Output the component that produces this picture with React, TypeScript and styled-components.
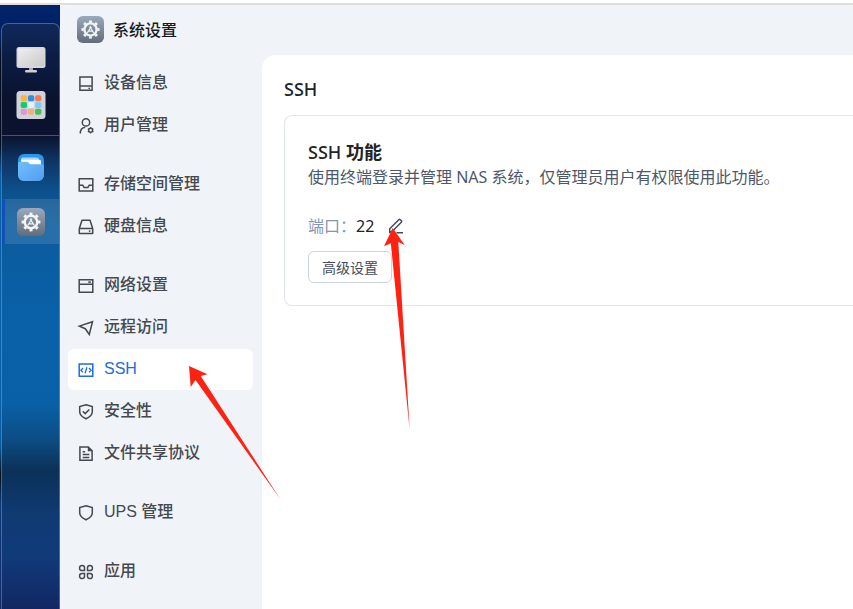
import React from "react";
import styled, { createGlobalStyle } from "styled-components";

const GlobalStyle = createGlobalStyle`
  *, *::before, *::after { box-sizing: border-box; }
  body {
    margin: 0;
    background: #fff;
    font-family: "Noto Sans", "Noto Sans CJK SC", sans-serif;
  }
  h1, h2, h3, p { margin: 0; }
`;

const Page = styled.div`
  display: flex;
  flex-direction: column;
  min-height: 100vh;
  border-top: 3px solid #fff;
  position: relative;
  overflow: hidden;
`;

const Screen = styled.div`
  flex: 1;
  display: flex;
  border-top: 2px solid #dfdfdf;
`;

const Desktop = styled.div`
  flex: none;
  width: 60px;
  display: flex;
  padding: 18px 0 0 1px;
  background: linear-gradient(
    180deg,
    #00246b 0,
    #001f60 34px,
    #020a20 50px,
    #020a20 140px,
    #0a5ea6 170px,
    #0a5ea6 440px,
    #050a18 470px,
    #0d3a78 500px,
    #102a66 100%
  );
`;

const Dock = styled.nav`
  flex: 1;
  border: 1px solid rgba(150, 180, 215, 0.42);
  border-bottom: 0;
  border-radius: 7px 7px 0 0;
  background: linear-gradient(
    180deg,
    #10285a 0,
    #0b1c44 36px,
    #0a122d 76px,
    #0b1330 112px,
    #0e3463 136px,
    #0c508b 166px,
    #0b5b9c 200px,
    #0a61a8 300px,
    #0a60a6 380px,
    #0c4d84 415px,
    #0b3159 446px,
    #0f3a72 490px,
    #103b7a 530px,
    #122763 100%
  );
`;

const DockSection = styled.div<{ $top?: boolean }>`
  display: flex;
  flex-direction: column;
  gap: ${(p) => (p.$top ? 0 : 9)}px;
  padding: ${(p) => (p.$top ? "13px 0 8px" : "9px 0 0")};
  border-bottom: ${(p) => (p.$top ? "1px solid rgba(150, 170, 205, 0.42)" : "0")};
`;

const DockButton = styled.button<{ $active?: boolean }>`
  height: 45px;
  padding: 0 2px 0 0;
  border: 0;
  border-left: 3px solid ${(p) => (p.$active ? "#124fb8" : "transparent")};
  background: ${(p) => (p.$active ? "rgba(255, 255, 255, 0.12)" : "transparent")};
  display: flex;
  align-items: center;
  justify-content: center;
  cursor: pointer;
`;

const Window = styled.div`
  flex: 1;
  min-width: 0;
  display: flex;
  flex-direction: column;
  background: #f0f4f9;
`;

const TitleBar = styled.header`
  display: flex;
  align-items: center;
  gap: 9px;
  height: 50px;
  padding: 0 17px 2px;
`;

const WindowTitle = styled.h1`
  font-size: 16px;
  line-height: 24px;
  font-weight: 500;
  color: #16191d;
  font-family: "Noto Sans CJK SC", sans-serif;
`;

const Body = styled.div`
  flex: 1;
  display: flex;
`;

const Sidebar = styled.nav`
  flex: none;
  width: 202px;
  display: flex;
  flex-direction: column;
  gap: 18px;
  padding: 8px 9px 8px 8px;
`;

const Group = styled.div`
  display: flex;
  flex-direction: column;
  gap: 1px;
`;

const NavItem = styled.button<{ $active?: boolean }>`
  display: flex;
  align-items: center;
  gap: 10px;
  height: 41px;
  padding: 0 10px;
  border: 0;
  border-radius: 6px;
  background: ${(p) => (p.$active ? "#fff" : "transparent")};
  color: ${(p) => (p.$active ? "#1d6ce0" : "#44484f")};
  font-family: "Liberation Sans", "Noto Sans CJK SC", sans-serif;
  font-size: 16px;
  font-weight: 500;
  line-height: 24px;
  text-align: left;
  cursor: pointer;
  svg { flex: none; overflow: visible; }
`;

const NavLabel = styled.span`
  padding-bottom: 1px;
`;

const Content = styled.main`
  flex: 1;
  min-width: 0;
  padding: 22px 0 22px 22px;
  border-radius: 14px 0 0 0;
  background: #fff;
`;

const PageTitle = styled.h2`
  font-size: 18px;
  line-height: 24px;
  font-weight: 500;
  color: #202327;
`;

const Card = styled.section`
  margin-top: 14px;
  padding: 23px 23px 22px;
  border: 1px solid #e1e5ec;
  border-right: 0;
  border-radius: 8px 0 0 8px;
`;

const CardTitle = styled.h3`
  font-size: 18px;
  line-height: 26px;
  font-weight: 500;
  color: #202327;
  b { font-weight: 700; }
`;

const Description = styled.p`
  font-size: 16px;
  line-height: 24px;
  color: #4d5769;
`;

const PortRow = styled.div`
  display: flex;
  align-items: center;
  margin-top: 25px;
  font-size: 16px;
  line-height: 24px;
`;

const PortLabel = styled.span`
  color: #8696b2;
`;

const PortValue = styled.span`
  color: #202327;
`;

const IconButton = styled.button`
  display: flex;
  margin-left: 14px;
  padding: 0;
  border: 0;
  background: none;
  color: #434c5e;
  cursor: pointer;
`;

const OutlineButton = styled.button`
  display: block;
  height: 32px;
  margin-top: 13px;
  padding: 0 13px 1px;
  border: 1px solid #ccd5e2;
  border-radius: 6px;
  background: #fff;
  color: #434c5e;
  font-family: "Noto Sans CJK SC", sans-serif;
  font-size: 14px;
  line-height: 20px;
  cursor: pointer;
`;

const Annotations = styled.svg`
  position: absolute;
  top: -3px;
  left: 0;
  pointer-events: none;
`;

const MonitorIcon = () => (
  <svg width="30" height="28" viewBox="0 0 30 28" aria-hidden="true">
    <defs>
      <linearGradient id="mon" x1="0" y1="0" x2="1" y2="1">
        <stop offset="0" stopColor="#efefef" />
        <stop offset="1" stopColor="#c9c9cb" />
      </linearGradient>
    </defs>
    <rect x="13" y="20" width="4" height="5" fill="#a9abb0" />
    <rect x="9" y="24" width="12" height="2.5" rx="1.2" fill="#cfd0d3" />
    <rect x="0.5" y="1" width="29" height="21" rx="2.5" fill="#d6d6d8" />
    <rect x="2" y="2.5" width="26" height="17.5" rx="1" fill="url(#mon)" />
  </svg>
);

const APP_COLORS = [
  "#fdb340", "#2f8de0", "#fb7657",
  "#0fcf6c", "#e6effb", "#74cdfb",
  "#e095d6", "#eab572", "#4fba58",
];

const AppsIcon = () => (
  <svg width="30" height="28" viewBox="0 0 30 28" aria-hidden="true">
    <rect x="0.5" y="0" width="29" height="28" rx="3.5" fill="#d0d4da" />
    {APP_COLORS.map((c, i) => (
      <rect key={c} x={4.7 + (i % 3) * 7.2} y={4.2 + Math.floor(i / 3) * 6.8} width="6.3" height="6" rx="1.8" fill={c} />
    ))}
  </svg>
);

const FolderIcon = () => (
  <svg width="26" height="27" viewBox="0 0 26 27" aria-hidden="true">
    <defs>
      <linearGradient id="fold" x1="0" y1="0" x2="1" y2="1">
        <stop offset="0" stopColor="#6fc0fb" />
        <stop offset="1" stopColor="#559cf0" />
      </linearGradient>
    </defs>
    <rect width="26" height="27" rx="6" fill="#2b97ee" />
    <path d="M4 3.5h15a2 2 0 0 1 2 2V9H3V5.500Z" fill="#a9d8fb" />
    <path d="M3 5.800h18.500a1.500 1.500 0 0 1 1.500 1.500V12H3Z" fill="#fff" />
    <path d="M0 9.800Q0 7.800 2 7.800h6.500q1.500 0 2.400 1.200t2.400 1.200H24q2 0 2 2V21a6 6 0 0 1-6 6H6a6 6 0 0 1-6-6Z" fill="url(#fold)" />
  </svg>
);

const SettingsIcon = ({ size, id }: { size: number; id: string }) => (
  <svg width={size} height={size} viewBox="0 0 28 28" aria-hidden="true">
    <defs>
      <linearGradient id={id} x1="0" y1="0" x2="0" y2="1">
        <stop offset="0" stopColor="#9aa9bd" />
        <stop offset="1" stopColor="#636c79" />
      </linearGradient>
    </defs>
    <rect width="28" height="28" rx="6" fill={`url(#${id})`} />
    <g stroke="#f2f4f6" fill="none">
      <circle cx="14" cy="14" r="6.300" strokeWidth="2.400" />
      {[0, 45, 90, 135, 180, 225, 270, 315].map((a) => (
        <path key={a} d="M14 7V4.600" strokeWidth="3" transform={`rotate(${a} 14 14)`} />
      ))}
      <path d="M14 10.800v2M13.500 13l-2.500 4M14.500 13l2.500 4M12.600 15.800h2.800" strokeWidth="1.300" strokeLinecap="round" />
      <circle cx="14" cy="11.800" r="0.700" strokeWidth="1" />
    </g>
  </svg>
);

const Glyph = ({ children }: { children: React.ReactNode }) => (
  <svg width="16" height="16" viewBox="0 0.500 16 16" fill="none" stroke="currentColor" strokeWidth="1.500" aria-hidden="true">
    {children}
  </svg>
);

const SHIELD = "M8 1.200 14.300 3v5.300c0 3.300-2.600 5.300-6.300 7-3.700-1.700-6.300-3.700-6.300-7V3Z";
const PETAL = "M6.500 7.100H4A2.400 2.400 0 0 1 1.600 4.700V4.200A2.300 2.300 0 0 1 3.900 1.900H4.200A2.300 2.300 0 0 1 6.500 4.200Z";

const icons = {
  device: (
    <Glyph>
      <path d="M1.900 1.600h12.200v13.200H1.900ZM1.900 10.600h12.200" />
      <circle cx="11.200" cy="12.800" r="0.900" fill="currentColor" stroke="none" />
    </Glyph>
  ),
  user: (
    <Glyph>
      <circle cx="8" cy="4.900" r="3.700" />
      <path d="M2.300 16c0-3.600 1.900-5.900 5-6.200" />
      <circle cx="12.600" cy="12.800" r="2" strokeWidth="1.400" />
      <path d="M12.600 9.600v1.200M12.600 14.800V16M9.800 11.200l1.100.6M15.400 11.200l-1.100.6M9.800 14.400l1.100-.6M15.400 14.400l-1.100-.6" strokeWidth="1.300" />
    </Glyph>
  ),
  storage: (
    <Glyph>
      <path d="M1.200 2.300h13.600v12.200H1.200ZM1.200 8.700h3.600l1.300 2.300h3.800l1.300-2.300h3.600" />
    </Glyph>
  ),
  disk: (
    <Glyph>
      <path d="M4 1.700h8l2.700 8.300v5H1.300v-5ZM1.300 10h13.400" strokeLinejoin="round" />
      <circle cx="11.600" cy="12.600" r="0.900" fill="currentColor" stroke="none" />
    </Glyph>
  ),
  network: (
    <Glyph>
      <path d="M1.200 2.300h13.600v12.400H1.200ZM1.200 6.800h13.600" />
      <path d="M10.300 4.600h2.600" />
    </Glyph>
  ),
  remote: (
    <Glyph>
      <path d="M1.300 6.600 14.500 2.200 11.300 15 7.300 9.200Z" strokeLinejoin="miter" />
    </Glyph>
  ),
  ssh: (
    <Glyph>
      <path d="M1.200 2.600h13.600v12.200H1.200Z" />
      <path d="M5 6.500 2.900 8.700 5 10.900M11 6.500l2.100 2.200L11 10.900M8.900 5.700 7.100 11.700" strokeWidth="1.300" />
    </Glyph>
  ),
  security: (
    <Glyph>
      <path d={SHIELD} />
      <path d="m4.800 7.700 2.400 2.400 4.100-4.200" />
    </Glyph>
  ),
  share: (
    <Glyph>
      <path d="M1.900 1.600h8.400l3.800 3.800v9.400H1.900Z" />
      <path d="M9.800 1.200v4.600h4.600Z" fill="currentColor" stroke="none" />
      <path d="M4.700 6.300h2.400M4.700 9h6.600M4.700 11.900h6.600" />
    </Glyph>
  ),
  ups: (
    <Glyph>
      <path d={SHIELD} />
    </Glyph>
  ),
  apps: (
    <Glyph>
      <path d={PETAL} />
      <path d={PETAL} transform="matrix(-1 0 0 1 16 0)" />
      <path d={PETAL} transform="matrix(1 0 0 -1 0 17)" />
      <path d={PETAL} transform="matrix(-1 0 0 -1 16 17)" />
    </Glyph>
  ),
};

type IconName = keyof typeof icons;

const GROUPS: { label: string; icon: IconName; active?: boolean }[][] = [
  [
    { label: "设备信息", icon: "device" },
    { label: "用户管理", icon: "user" },
  ],
  [
    { label: "存储空间管理", icon: "storage" },
    { label: "硬盘信息", icon: "disk" },
  ],
  [
    { label: "网络设置", icon: "network" },
    { label: "远程访问", icon: "remote" },
    { label: "SSH", icon: "ssh", active: true },
    { label: "安全性", icon: "security" },
    { label: "文件共享协议", icon: "share" },
  ],
  [{ label: "UPS 管理", icon: "ups" }],
  [{ label: "应用", icon: "apps" }],
];

export default function App() {
  return (
    <>
      <GlobalStyle />
      <Page>
        <Screen>
          <Desktop>
            <Dock>
              <DockSection $top>
                <DockButton aria-label="桌面"><MonitorIcon /></DockButton>
                <DockButton aria-label="应用程序"><AppsIcon /></DockButton>
              </DockSection>
              <DockSection>
                <DockButton aria-label="文件"><FolderIcon /></DockButton>
                <DockButton aria-label="设置" $active><SettingsIcon size={28} id="dock-gear" /></DockButton>
              </DockSection>
            </Dock>
          </Desktop>
          <Window>
            <TitleBar>
              <SettingsIcon size={27} id="title-gear" />
              <WindowTitle>系统设置</WindowTitle>
            </TitleBar>
            <Body>
              <Sidebar>
                {GROUPS.map((group) => (
                  <Group key={group[0].label}>
                    {group.map((item) => (
                      <NavItem key={item.label} $active={item.active} aria-current={item.active ? "page" : undefined}>
                        {icons[item.icon]}
                        <NavLabel>{item.label}</NavLabel>
                      </NavItem>
                    ))}
                  </Group>
                ))}
              </Sidebar>
              <Content>
                <PageTitle>SSH</PageTitle>
                <Card>
                  <CardTitle>SSH <b>功能</b></CardTitle>
                  <Description>使用终端登录并管理 NAS 系统，仅管理员用户有权限使用此功能。</Description>
                  <PortRow>
                    <PortLabel>端口：</PortLabel>
                    <PortValue>22</PortValue>
                    <IconButton aria-label="编辑端口">
                      <svg width="16" height="16" viewBox="0 0 16 16" fill="none" stroke="currentColor" strokeWidth="1.500" aria-hidden="true">
                        <path d="M1.700 14.300v-3.500L10.800 1.700a1 1 0 0 1 1.400 0l1.100 1.100a1 1 0 0 1 0 1.400L4.500 13.200ZM8.500 14.800H15" />
                      </svg>
                    </IconButton>
                  </PortRow>
                  <OutlineButton>高级设置</OutlineButton>
                </Card>
              </Content>
            </Body>
          </Window>
        </Screen>
        <Annotations width="420" height="510" viewBox="0 0 420 510" fill="#ff2213" aria-hidden="true">
          <path d="M189 366 207.500 374.300 200.700 376 280.500 499.500 195.500 380 190.700 387Z" />
          <path d="M392.700 228 404.700 245 398.300 242 409.700 430 390.800 243.300 384 246.300Z" />
        </Annotations>
      </Page>
    </>
  );
}
